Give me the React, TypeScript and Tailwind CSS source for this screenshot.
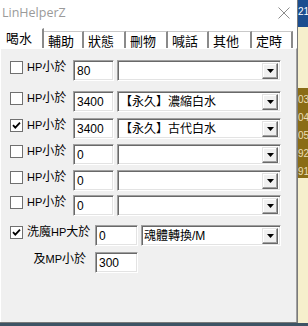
import React from 'react';

const FONT = { fontFamily: '"Liberation Sans", "Noto Sans CJK TC", sans-serif' };

const tabs = ['喝水', '輔助', '狀態', '刪物', '喊話', '其他', '定時'];
const tabWidths = [44, 40, 42, 42, 41, 43, 41];

function CheckBox({ checked }: { checked?: boolean }) {
  return (
    <div className="w-[13px] h-[13px] shrink-0 border border-[#707070] bg-white flex items-center justify-center">
      {checked && (
        <svg width="11" height="11" viewBox="0 0 11 11">
          <path d="M2 5.2 L4.3 7.6 L9 2.6" fill="none" stroke="#000" strokeWidth="1.8" />
        </svg>
      )}
    </div>
  );
}

function TextBox({ value, w }: { value: string; w: string }) {
  return (
    <div
      className={`${w} h-[21px] shrink-0 bg-white border border-t-[#a0a0a0] border-l-[#a0a0a0] border-r-white border-b-white shadow-[inset_1px_1px_0_#696969,inset_-1px_-1px_0_#e3e3e3] flex items-center pl-[3px] text-[12px] text-black`}
    >
      {value}
    </div>
  );
}

function Combo({ text, w }: { text: string; w: string }) {
  return (
    <div
      className={`${w} h-[21px] shrink-0 bg-white border border-t-[#a0a0a0] border-l-[#a0a0a0] border-r-white border-b-white shadow-[inset_1px_1px_0_#696969,inset_-1px_-1px_0_#e3e3e3] flex items-center pl-[2px] pr-[2px]`}
    >
      <span className="flex-1 text-[12px] text-black whitespace-nowrap overflow-hidden">{text}</span>
      <div className="w-[16px] h-[16px] bg-[#f0f0f0] border border-t-[#e3e3e3] border-l-[#e3e3e3] border-r-[#696969] border-b-[#696969] shadow-[inset_-1px_-1px_0_#a0a0a0,inset_1px_1px_0_#fff] flex items-center justify-center">
        <svg width="7" height="4" viewBox="0 0 7 4">
          <polygon points="0,0 7,0 3.5,4" fill="#000" />
        </svg>
      </div>
    </div>
  );
}

function HpRow({ checked, value, item, mt }: { checked?: boolean; value: string; item: string; mt: string }) {
  return (
    <div className={`flex items-start h-[21px] ${mt}`}>
      <div className="ml-[9px] mt-[1px]">
        <CheckBox checked={checked} />
      </div>
      <span className="ml-[4px] w-[46px] text-[12px] leading-[15px] text-black">
        <span className="text-[11px]">HP</span>小於
      </span>
      <TextBox value={value} w="w-[41px]" />
      <div className="ml-[3px]">
        <Combo text={item} w="w-[164px]" />
      </div>
    </div>
  );
}

export default function App() {
  return (
    <div className="w-[308px] h-[326px] flex flex-col overflow-hidden bg-[#f6efcc]" style={FONT}>
      <div className="flex h-[323px]">
        <div className="w-[298px] h-full flex flex-col bg-white border-r border-b border-[#7a7a7a]">
          {/* title bar */}
          <div className="h-[26px] flex items-center justify-between pl-[2px] pr-[7px]">
            <span className="text-[12.5px] text-[#9a9a9a]" style={{ fontFamily: '"Open Sans", "Noto Sans", sans-serif' }}>
              LinHelperZ
            </span>
            <svg width="12" height="12" viewBox="0 0 12 12">
              <path d="M0.5 0.5 L11.5 11.5 M11.5 0.5 L0.5 11.5" stroke="#8c8c8c" strokeWidth="1" />
            </svg>
          </div>

          {/* tabs */}
          <div className="h-[22px] flex items-end">
            {tabs.map((t, i) => {
              const active = i === 0;
              return (
                <div
                  key={t}
                  style={{ width: tabWidths[i] }}
                  className={
                    active
                      ? 'h-[20px] pl-[5px] pt-[3px] border-t border-l border-white border-r-2 border-r-[#8a8a8a] bg-white text-[13px] leading-[14px] text-black'
                      : 'h-[17px] pl-[4px] pt-[3px] border-t border-[#c9c9c9] border-r-2 border-r-[#8a8a8a] bg-white text-[13px] leading-[14px] text-black'
                  }
                >
                  {t}
                </div>
              );
            })}
          </div>

          {/* panel */}
          <div className="flex-1 flex flex-col bg-[#f0f0f0] border-l border-t border-white border-r border-r-[#a0a0a0]">
            <HpRow value="80" item="" mt="mt-[11px]" />
            <HpRow value="3400" item="【永久】濃縮白水" mt="mt-[10px]" />
            <HpRow checked value="3400" item="【永久】古代白水" mt="mt-[6px]" />
            <HpRow value="0" item="" mt="mt-[5px]" />
            <HpRow value="0" item="" mt="mt-[5px]" />
            <HpRow value="0" item="" mt="mt-[4px]" />

            <div className="flex items-start h-[21px] mt-[9px]">
              <div className="ml-[9px] mt-[1px]">
                <CheckBox checked />
              </div>
              <span className="ml-[4px] w-[68px] text-[12px] leading-[15px] text-black">
                洗魔<span className="text-[11px]">HP</span>大於
              </span>
              <TextBox value="0" w="w-[43px]" />
              <div className="ml-[3px]">
                <Combo text="魂體轉換/M" w="w-[140px]" />
              </div>
            </div>

            <div className="flex items-start h-[21px] mt-[6px]">
              <span className="w-[86px] pr-[1px] text-right text-[12px] leading-[15px] text-black">
                及<span className="text-[11px]">MP</span>小於
              </span>
              <div className="ml-[8px]">
                <TextBox value="300" w="w-[43px]" />
              </div>
            </div>
          </div>
        </div>

        {/* desktop behind the window */}
        <div className="flex-1 flex flex-col overflow-hidden">
          <div className="h-[27px] bg-[#1b4d8f] text-white text-[10px] leading-[14px] pt-[5px] whitespace-nowrap">21</div>
          <div className="h-[61px] bg-[#f6efcc]" />
          <div className="h-[90px] bg-[#8a6c16] text-[#eadfb8] text-[10px] leading-[18px] pt-[3px] whitespace-nowrap">
            <div>03</div>
            <div>04</div>
            <div>05</div>
            <div>92</div>
            <div>91</div>
          </div>
          <div className="flex-1 bg-[#f6efcc]" />
        </div>
      </div>
      <div className="h-[3px] bg-[#3d5364]" />
    </div>
  );
}
